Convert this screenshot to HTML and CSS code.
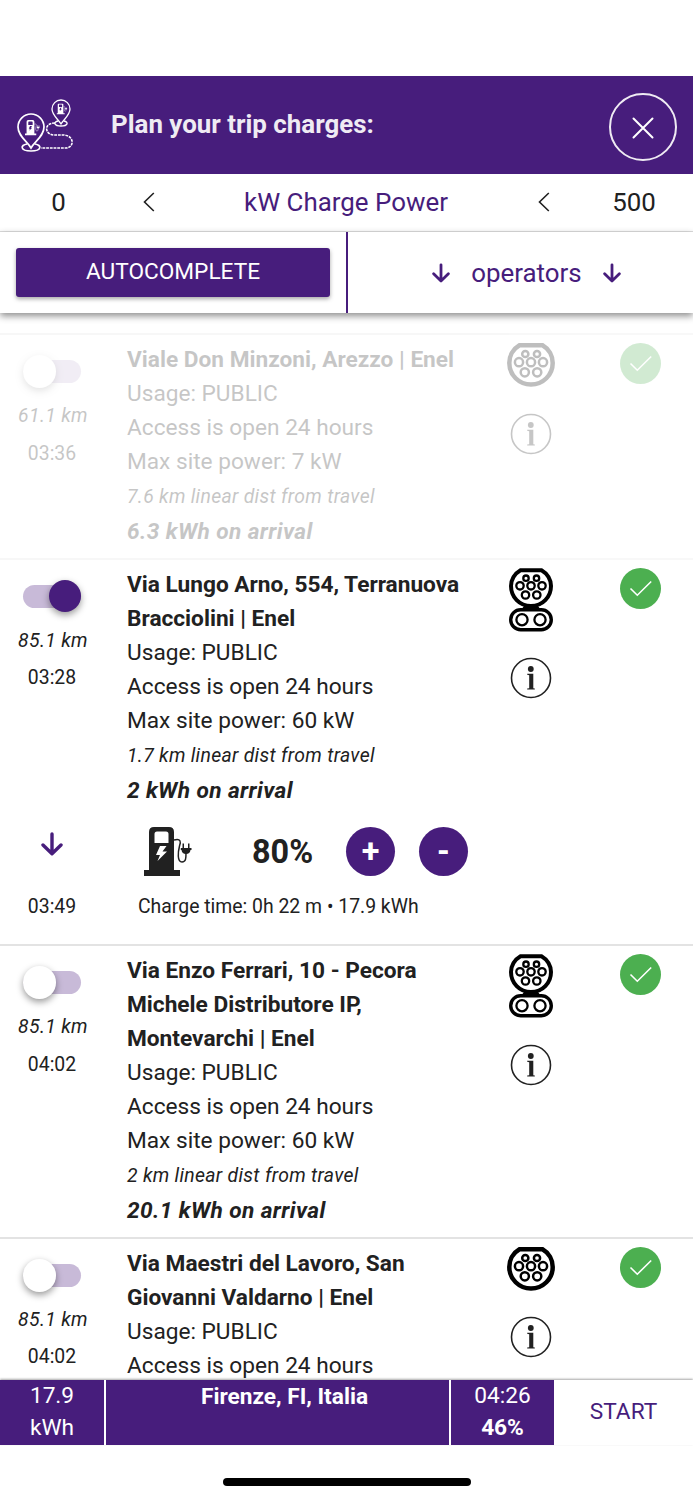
FILE: index.html
```
<!DOCTYPE html>
<html lang="en">
<head>
    <meta charset="UTF-8">
    <meta name="viewport" content="width=device-width, initial-scale=1.0">
    <title>Plan your trip charges</title>
    <link rel="stylesheet" href="styles.css">
</head>
<body>
    <!-- Shared icons -->
    <svg class="sprite" width="0" height="0">
        <symbol id="icon-pump" viewBox="0 0 48 49">
            <path fill="currentColor" fill-rule="evenodd" d="M5 43V5Q5 0 10 0H25Q30 0 30 5V43H36V49H0V43ZM10.500 7V16H24.500V7Q24.500 4.500 22 4.500H13Q10.500 4.500 10.500 7ZM16 19L12 28H16L13.500 34L23 24.500H18.500L22.500 19Z"/>
            <path fill="none" stroke="currentColor" stroke-width="1.500" d="M30 13C37 11 37 15 35.500 19C34 25 33 35 38 35C42 35 42 31 42 26"/>
            <path fill="currentColor" d="M38.500 16.500H40V21H44V16.500H45.500V21H47.500V23H46.500Q46 27 42 27Q38 27 37.500 23H36.800V21H38.500Z"/>
        </symbol>
        <symbol id="icon-type2" viewBox="0 0 48 44">
            <path fill="none" stroke="currentColor" stroke-width="4.500" d="M12.500 2.300H35.500C42 6 45.700 13 45.700 20C45.700 32 36 41.500 24 41.500S2.300 32 2.300 20C2.300 13 6 6 12.500 2.300Z"/>
            <g fill="none" stroke="currentColor" stroke-width="2.500">
                <circle cx="18.300" cy="11" r="3.100"/><circle cx="30" cy="11" r="3.100"/>
                <circle cx="12" cy="19.200" r="4.100"/><circle cx="24" cy="19.200" r="4.100"/><circle cx="36" cy="19.200" r="4.100"/>
                <circle cx="17.800" cy="29.300" r="4.100"/><circle cx="30.200" cy="29.300" r="4.100"/>
            </g>
        </symbol>
        <symbol id="icon-ccs" viewBox="0 0 44 64">
            <path fill="none" stroke="currentColor" stroke-width="4" d="M11.500 2.200H32.500C38.500 5.500 42 12 42 18C42 29 33.500 38 22 38S2 29 2 18C2 12 5.500 5.500 11.500 2.200Z"/>
            <path fill="currentColor" d="M15 38H29L32 42H12Z"/>
            <rect x="1.700" y="41.700" width="40.600" height="20" rx="10" fill="#fff" stroke="currentColor" stroke-width="3.400"/>
            <g fill="none" stroke="currentColor" stroke-width="2.300">
                <circle cx="17" cy="10.200" r="2.700"/><circle cx="27.500" cy="10.200" r="2.700"/>
                <circle cx="11" cy="17.800" r="3.700"/><circle cx="22" cy="17.800" r="3.700"/><circle cx="33" cy="17.800" r="3.700"/>
                <circle cx="16.500" cy="27" r="3.700"/><circle cx="27.800" cy="27" r="3.700"/>
                <circle cx="13" cy="51.700" r="5.600"/><circle cx="31" cy="51.700" r="5.600"/>
            </g>
        </symbol>
        <symbol id="icon-info" viewBox="0 0 42 42">
            <circle cx="21" cy="21" r="19.500" fill="none" stroke="currentColor" stroke-width="1.600"/>
            <circle cx="20.800" cy="12" r="2.900" fill="currentColor"/>
            <path fill="currentColor" d="M17.200 16.800H23.300V31.200L24.800 31.500V32.500H17.200V31.500L19.200 31.200V18.200L17.200 17.800Z"/>
        </symbol>
        <symbol id="icon-check" viewBox="0 0 41 41">
            <circle cx="20.500" cy="20.500" r="20.500" fill="#4caf50"/>
            <path fill="none" stroke="#fff" stroke-width="1.600" d="M10.500 20.500L17.300 27.200L31.200 13.500"/>
        </symbol>
        <symbol id="icon-down" viewBox="0 0 22 24">
            <path fill="none" stroke="currentColor" stroke-width="3.400" stroke-linecap="round" stroke-linejoin="round" d="M11 2V21.500M2 13L11 21.800L20 13"/>
        </symbol>
        <symbol id="icon-left" viewBox="0 0 12 20">
            <path fill="none" stroke="currentColor" stroke-width="1.600" d="M10.800 1L1.500 10L10.800 19"/>
        </symbol>
    </svg>

    <header class="header">
        <svg class="trip-icon" viewBox="0 0 58 54">
            <g fill="none" stroke="currentColor">
                <g stroke-width="1.700">
                    <path d="M14 49C10 42 1 37 1 28A13 13 0 0 1 27 28C27 37 18 42 14 49Z"/>
                    <path d="M10 45C3 46 3 52 14 52S25 46 18 45"/>
                </g>
                <g stroke-width="1.300">
                    <path d="M44 25C41 20 35 16 35 10A9 9 0 0 1 53 10C53 16 47 20 44 25Z"/>
                    <path d="M41 22C36 23 37 27 44 27S52 23 47 22"/>
                </g>
                <path stroke-width="1.600" stroke-dasharray="2.800 0.900" d="M38 24C26 24 28 36 37 36H47C58 37 57 49 49 49H24"/>
            </g>
            <use href="#icon-pump" x="8" y="21" width="15" height="15.500"/>
            <use href="#icon-pump" x="39.500" y="4.500" width="11" height="11"/>
        </svg>
        <h1 class="header-title">Plan your trip charges:</h1>
        <button class="close-button" aria-label="Close">
            <svg viewBox="0 0 22 22"><path fill="none" stroke="currentColor" stroke-width="2" stroke-linecap="round" d="M1.500 1.500L20.500 20.500M20.500 1.500L1.500 20.500"/></svg>
        </button>
    </header>

    <div class="power-bar">
        <span class="power-value">0</span>
        <svg class="chevron"><use href="#icon-left"/></svg>
        <span class="power-label">kW Charge Power</span>
        <svg class="chevron"><use href="#icon-left"/></svg>
        <span class="power-value">500</span>
    </div>

    <div class="filter-bar">
        <div class="filter-auto">
            <button class="auto-button">AUTOCOMPLETE</button>
        </div>
        <div class="filter-operators">
            <svg class="arrow-small"><use href="#icon-down"/></svg>
            <span>operators</span>
            <svg class="arrow-small"><use href="#icon-down"/></svg>
        </div>
    </div>

    <main class="station-list">
        <!-- Scrolled under the filter bar -->
        <section class="station scrolled faded">
            <div class="stop"></div>
            <div class="details">
                <p class="arrival">9.8 kWh on arrival</p>
            </div>
        </section>

        <section class="station faded">
            <div class="stop">
                <div class="switch"><span class="knob"></span></div>
                <p class="distance">61.1 km</p>
                <p class="time">03:36</p>
            </div>
            <div class="details">
                <h2>Viale Don Minzoni, Arezzo | Enel</h2>
                <p>Usage: PUBLIC</p>
                <p>Access is open 24 hours</p>
                <p>Max site power: 7 kW</p>
                <p class="linear">7.6 km linear dist from travel</p>
                <p class="arrival">6.3 kWh on arrival</p>
            </div>
            <div class="plugs">
                <svg class="type2"><use href="#icon-type2"/></svg>
                <svg class="info"><use href="#icon-info"/></svg>
            </div>
            <div class="status"><svg class="check"><use href="#icon-check"/></svg></div>
        </section>

        <section class="station">
            <div class="stop">
                <div class="switch on"><span class="knob"></span></div>
                <p class="distance">85.1 km</p>
                <p class="time">03:28</p>
            </div>
            <div class="details">
                <h2>Via Lungo Arno, 554, Terranuova Bracciolini | Enel</h2>
                <p>Usage: PUBLIC</p>
                <p>Access is open 24 hours</p>
                <p>Max site power: 60 kW</p>
                <p class="linear">1.7 km linear dist from travel</p>
                <p class="arrival">2 kWh on arrival</p>
            </div>
            <div class="plugs">
                <svg class="ccs"><use href="#icon-ccs"/></svg>
                <svg class="info"><use href="#icon-info"/></svg>
            </div>
            <div class="status"><svg class="check"><use href="#icon-check"/></svg></div>

            <!-- Charge settings of the selected station -->
            <div class="charge-stop">
                <svg class="arrow"><use href="#icon-down"/></svg>
                <p class="time">03:49</p>
            </div>
            <div class="charge">
                <div class="charge-controls">
                    <svg class="pump"><use href="#icon-pump"/></svg>
                    <span class="charge-level">80%</span>
                    <button class="round-button">+</button>
                    <button class="round-button">-</button>
                </div>
                <p class="charge-time">Charge time: 0h 22 m • 17.9 kWh</p>
            </div>
        </section>

        <section class="station">
            <div class="stop">
                <div class="switch"><span class="knob"></span></div>
                <p class="distance">85.1 km</p>
                <p class="time">04:02</p>
            </div>
            <div class="details">
                <h2>Via Enzo Ferrari, 10 - Pecora Michele Distributore IP, Montevarchi | Enel</h2>
                <p>Usage: PUBLIC</p>
                <p>Access is open 24 hours</p>
                <p>Max site power: 60 kW</p>
                <p class="linear">2 km linear dist from travel</p>
                <p class="arrival">20.1 kWh on arrival</p>
            </div>
            <div class="plugs">
                <svg class="ccs"><use href="#icon-ccs"/></svg>
                <svg class="info"><use href="#icon-info"/></svg>
            </div>
            <div class="status"><svg class="check"><use href="#icon-check"/></svg></div>
        </section>

        <section class="station">
            <div class="stop">
                <div class="switch"><span class="knob"></span></div>
                <p class="distance">85.1 km</p>
                <p class="time">04:02</p>
            </div>
            <div class="details">
                <h2>Via Maestri del Lavoro, San Giovanni Valdarno | Enel</h2>
                <p>Usage: PUBLIC</p>
                <p>Access is open 24 hours</p>
            </div>
            <div class="plugs">
                <svg class="type2"><use href="#icon-type2"/></svg>
                <svg class="info"><use href="#icon-info"/></svg>
            </div>
            <div class="status"><svg class="check"><use href="#icon-check"/></svg></div>
        </section>
    </main>

    <footer class="footer">
        <div class="footer-cell">17.9<br>kWh</div>
        <div class="footer-cell destination">Firenze, FI, Italia</div>
        <div class="footer-cell">04:26<br><b>46%</b></div>
        <button class="start-button">START</button>
    </footer>
    <div class="home-indicator"></div>
</body>
</html>
```

FILE: styles.css
```
* {
    margin: 0;
    padding: 0;
    box-sizing: border-box;
}

body {
    background: #fff;
    height: 1500px;
    padding-top: 76px;
    display: flex;
    flex-direction: column;
    overflow: hidden;
    font-family: Roboto, sans-serif;
    font-size: 22.67px;
    line-height: 34px;
    color: #212121;
}

button {
    font: inherit;
    border: none;
    background: none;
    cursor: pointer;
}

svg {
    display: block;
    flex: none;
}

.sprite {
    position: absolute;
}

/* Header */
.header {
    flex: none;
    height: 97.5px;
    padding: 0 16.5px;
    display: flex;
    align-items: center;
    background: #471d7c;
    color: #fff;
}

.trip-icon {
    width: 58px;
    height: 54px;
    margin-top: 3px;
}

.header-title {
    flex: 1;
    margin: -2px 0 0 36.5px;
    font-size: 25.9px;
    font-weight: bold;
    color: #efebf3;
}

.close-button {
    width: 68px;
    height: 68px;
    margin-top: 4px;
    display: flex;
    align-items: center;
    justify-content: center;
    border: 2px solid #efebf3;
    border-radius: 50%;
    color: #fff;
}

.close-button svg {
    width: 22px;
    height: 22px;
    margin-top: 2px;
}

/* Power range */
.power-bar {
    flex: none;
    height: 58.5px;
    display: grid;
    grid-template-columns: 117px 63px 332px 63px 118px;
    align-items: center;
    justify-items: center;
    border-bottom: 1px solid #dedede;
    font-size: 25.9px;
}

.power-label {
    color: #471d7c;
}

.chevron {
    width: 12px;
    height: 20px;
}

/* Autocomplete and operators */
.filter-bar {
    flex: none;
    height: 81px;
    display: flex;
    position: relative;
    z-index: 2;
    background: #fff;
    box-shadow: 0 3px 7px rgba(0, 0, 0, 0.45);
}

.filter-auto {
    width: 348px;
    padding: 16px;
    border-right: 2px solid #471d7c;
}

.auto-button {
    width: 314px;
    height: 48.5px;
    background: #471d7c;
    color: #fff;
    border-radius: 3px;
    box-shadow: 0 2px 4px rgba(0, 0, 0, 0.35);
}

.filter-operators {
    flex: 1;
    display: flex;
    align-items: center;
    justify-content: center;
    gap: 21px;
    padding-left: 12px;
    font-size: 25.9px;
    color: #471d7c;
}

.arrow-small {
    width: 18px;
    height: 20px;
}

/* Stations */
.station-list {
    flex: none;
    height: 1091px;
    margin-top: -24px;
    overflow: hidden;
}

.station {
    display: grid;
    grid-template-columns: 104px 346px 115px 105px;
    border-bottom: 2px solid #e3e3e3;
    padding: 6px 0 8.6px;
}

.station.scrolled {
    height: 46px;
    padding: 0;
}

.faded {
    opacity: 0.25;
}

.stop {
    display: flex;
    flex-direction: column;
    align-items: center;
}

.details {
    margin: 2px -23px 0 23px;
}

.scrolled .details {
    margin-top: -1px;
}

.details h2 {
    font-size: inherit;
    font-weight: bold;
}

.linear {
    font-size: 19.4px;
    font-style: italic;
    line-height: 35px;
    letter-spacing: 0.3px;
}

.arrival {
    font-weight: bold;
    font-style: italic;
    line-height: 35px;
    letter-spacing: 0.4px;
}

.switch {
    width: 58px;
    height: 23px;
    margin-top: 19px;
    display: flex;
    align-items: center;
    border-radius: 12px;
    background: #c8bad8;
}

.switch.on {
    justify-content: flex-end;
}

.knob {
    width: 32.5px;
    height: 32.5px;
    flex: none;
    border-radius: 50%;
    background: #fff;
    box-shadow: 0 3px 7px rgba(0, 0, 0, 0.4);
}

.on .knob {
    background: #471d7c;
}

.distance,
.time,
.charge-time {
    font-size: 19.4px;
}

.distance {
    margin-top: 16px;
    padding-left: 2px;
    font-style: italic;
    letter-spacing: 0.35px;
}

.time {
    margin-top: 3.5px;
}

.plugs {
    margin: 2px -23px 0 23px;
    display: flex;
    flex-direction: column;
    align-items: center;
    color: #000;
}

.type2 {
    width: 48px;
    height: 44px;
}

.ccs {
    width: 44px;
    height: 64px;
}

.info {
    width: 42px;
    height: 42px;
    margin-top: 25.5px;
    color: #212121;
}

.status {
    margin: 2px -23px 0 23px;
    display: flex;
    justify-content: center;
}

.check {
    width: 41px;
    height: 41px;
}

/* Charge settings */
.charge-stop {
    display: flex;
    flex-direction: column;
    align-items: center;
    padding-top: 24px;
}

.arrow {
    width: 22px;
    height: 24px;
    color: #471d7c;
}

.charge-stop .time {
    margin-top: 34px;
}

.charge {
    grid-column: 2 / -1;
    padding: 19px 0 12px 40px;
}

.charge-controls {
    display: flex;
    align-items: center;
}

.pump {
    width: 48px;
    height: 49px;
}

.charge-level {
    width: 62px;
    margin: 1px 32px 0 60px;
    font-size: 32.4px;
    font-weight: bold;
}

.round-button {
    width: 49px;
    height: 49px;
    margin-right: 24px;
    border-radius: 50%;
    background: #471d7c;
    color: #fff;
    font-size: 32.4px;
    font-weight: bold;
}

.charge-time {
    margin: 14px 0 0 -6px;
}

/* Footer */
.footer {
    flex: none;
    height: 64.5px;
    display: grid;
    grid-template-columns: 104px 343px 103px 1fr;
    column-gap: 2px;
    position: relative;
    z-index: 2;
    background: #fff;
    box-shadow: 0 -1px 2px rgba(0, 0, 0, 0.35);
    line-height: 32.4px;
}

.footer-cell {
    background: #471d7c;
    color: #fff;
    text-align: center;
}

.destination {
    padding: 1px 0 0 14px;
    font-weight: bold;
}

.start-button {
    padding-right: 2px;
    color: #471d7c;
}

.home-indicator {
    flex: none;
    width: 248px;
    height: 8px;
    margin: 33.5px auto 0;
    border-radius: 4px;
    background: #000;
}
```
